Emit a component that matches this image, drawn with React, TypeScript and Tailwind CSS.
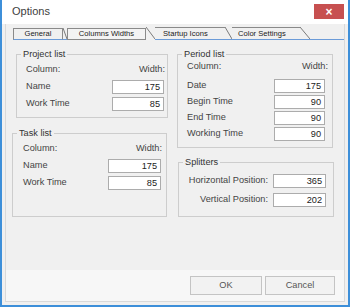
import React from 'react';

function Field({ value, className }: { value: string; className: string }) {
  return (
    <div className={`h-[14px] border border-[#acacac] bg-white pr-[3px] text-right leading-[12px] text-[#222] ${className}`}>
      {value}
    </div>
  );
}

function Group({ title, className, inner, children }: { title: string; className: string; inner: string; children: React.ReactNode }) {
  return (
    <fieldset className={`border border-[#cdcdcd] ${className}`}>
      <legend className="ml-[4px] px-[2px] leading-[13px] text-[#333]">{title}</legend>
      <div className={inner}>{children}</div>
    </fieldset>
  );
}

function Slant({ className }: { className: string }) {
  return (
    <div className={`border-b ${className}`}>
      <svg className="h-full w-full" viewBox="0 0 10 12" preserveAspectRatio="none">
        <line x1="0" y1="0" x2="10" y2="12" stroke="#7a7a7a" strokeWidth="1" vectorEffect="non-scaling-stroke" />
      </svg>
    </div>
  );
}

export default function App() {
  return (
    <div className="flex h-[307px] w-[350px] flex-col border-x-2 border-b-2 border-[#3d8fd9] bg-white font-['Liberation_Sans',Arial,sans-serif] text-[9.2px] text-[#444]">
      {/* title bar */}
      <div className="flex h-[24px] items-start justify-between bg-white">
        <div className="pl-[10px] pt-[5px] text-[11px] leading-[13px] text-[#404040]">Options</div>
        <div className="mr-[4px] mt-[4px] flex h-[15px] w-[30px] items-center justify-center bg-[#c75050] text-[12px] font-bold leading-none text-white">
          ×
        </div>
      </div>

      <div className="flex flex-1 flex-col bg-[#f0f0f0] px-[3px] pb-[3px]">
        <div className="flex flex-1 flex-col border-x border-b border-[#d9d9d9]">
          {/* tabs */}
          <div className="mt-[2px] flex h-[14px] items-end pl-[7px] text-[7.6px] leading-none text-[#222]">
            <div className="flex h-[12px] w-[50px] items-center justify-center border border-[#8a8a8a] border-b-[#6b9bd8]">General</div>
            <Slant className="h-[12px] w-[4px] border-[#6b9bd8]" />
            <div className="flex h-[12px] w-[79px] items-center justify-center border border-[#8a8a8a] bg-[#f3f3f3]">Columns Widths</div>
            <Slant className="h-[13px] w-[9px] border-transparent" />
            <div className="flex h-[13px] w-[70px] items-center border-y border-t-[#8a8a8a] border-b-[#6b9bd8] pl-[8px]">Startup Icons</div>
            <Slant className="h-[13px] w-[7px] border-[#6b9bd8]" />
            <div className="flex h-[13px] w-[68px] items-center border-y border-t-[#8a8a8a] border-b-[#6b9bd8] pl-[6px]">Color Settings</div>
            <Slant className="h-[13px] w-[10px] border-[#6b9bd8]" />
            <div className="h-[13px] flex-1 border-b border-[#6b9bd8]" />
          </div>

          {/* tab page */}
          <div className="flex h-[230px] pl-[6px] pt-[8px]">
            <div className="flex w-[156px] flex-col">
              <Group title="Project list" className="ml-[4px] w-[152px] pb-[5px]" inner="pl-[9px] pr-[3px]">
                <div className="flex h-[17px] items-center justify-between">
                  <span>Column:</span>
                  <span className="-mr-[1px]">Width:</span>
                </div>
                <div className="flex h-[17px] items-center justify-between">
                  <span>Name</span>
                  <Field value="175" className="w-[52px]" />
                </div>
                <div className="flex h-[17px] items-center justify-between">
                  <span>Work Time</span>
                  <Field value="85" className="w-[52px]" />
                </div>
              </Group>
              <Group title="Task list" className="mt-[9px] w-[155px] pb-[25px]" inner="pl-[10px] pr-[5px]">
                <div className="flex h-[17px] items-center justify-between">
                  <span>Column:</span>
                  <span className="-mr-[1px]">Width:</span>
                </div>
                <div className="flex h-[17px] items-center justify-between">
                  <span>Name</span>
                  <Field value="175" className="w-[53px]" />
                </div>
                <div className="flex h-[17px] items-center justify-between">
                  <span>Work Time</span>
                  <Field value="85" className="w-[53px]" />
                </div>
              </Group>
            </div>

            <div className="ml-[9px] flex w-[157px] flex-col">
              <Group title="Period list" className="w-[156px] pb-[5px]" inner="pl-[9px] pr-[7px]">
                <div className="-mt-[2px] flex h-[16px] items-center justify-between">
                  <span>Column:</span>
                  <span className="-mr-[3px]">Width:</span>
                </div>
                <div className="mt-[3px] flex h-[16px] items-center justify-between">
                  <span>Date</span>
                  <Field value="175" className="w-[51px]" />
                </div>
                <div className="flex h-[16px] items-center justify-between">
                  <span>Begin Time</span>
                  <Field value="90" className="w-[51px]" />
                </div>
                <div className="flex h-[16px] items-center justify-between">
                  <span>End Time</span>
                  <Field value="90" className="w-[51px]" />
                </div>
                <div className="flex h-[16px] items-center justify-between">
                  <span>Working Time</span>
                  <Field value="90" className="w-[51px]" />
                </div>
              </Group>
              <Group title="Splitters" className="ml-[1px] mt-[8px] w-[156px] pb-[8px]" inner="pr-[7px]">
                <div className="mt-[3px] flex h-[17px] items-center justify-end gap-[5px]">
                  <span>Horizontal Position:</span>
                  <Field value="365" className="w-[53px]" />
                </div>
                <div className="mt-[2px] flex h-[17px] items-center justify-end gap-[5px]">
                  <span>Vertical Position:</span>
                  <Field value="202" className="w-[53px]" />
                </div>
              </Group>
            </div>
          </div>

          {/* footer */}
          <div className="flex flex-1 items-start justify-end gap-[3px] bg-[#f7f7f7] pr-[9px] pt-[6px]">
            <button className="h-[19px] w-[72px] border border-[#c4c4c4] bg-[#f2f2f2] text-[9.2px] text-[#555]">OK</button>
            <button className="h-[19px] w-[70px] border border-[#c4c4c4] bg-[#f2f2f2] text-[9.2px] text-[#555]">Cancel</button>
          </div>
        </div>
      </div>
    </div>
  );
}
